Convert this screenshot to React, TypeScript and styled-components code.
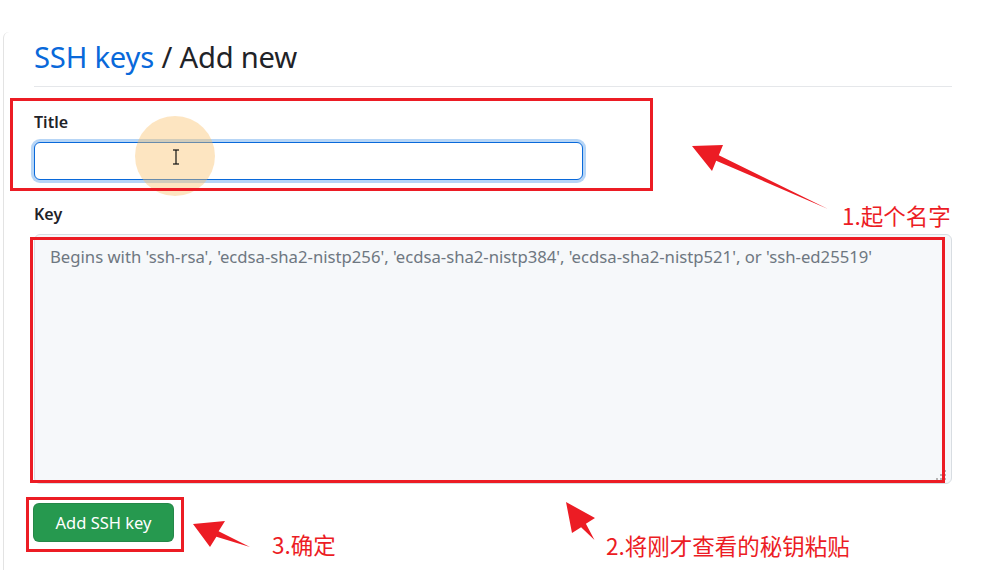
import React from "react";
import styled, { createGlobalStyle } from "styled-components";

const GlobalStyle = createGlobalStyle`
  html, body { margin: 0; padding: 0; background: #ffffff; }
  body { font-family: "Noto Sans", "Liberation Sans", sans-serif; color: #1f2328; }
  * { box-sizing: border-box; }
`;

const Page = styled.div`
  position: relative;
  width: 1000px;
  height: 570px;
  overflow: hidden;
  display: flex;
  background: #fff;
`;

const Rail = styled.div`
  width: 3px;
  flex: none;
`;

const Panel = styled.main`
  flex: 1;
  margin-top: 32px;
  border-left: 1px solid #e3e3e3;
  border-top-left-radius: 6px;
  padding: 5px 0 0 30px;
`;

const Content = styled.div`
  width: 918px;
  display: flex;
  flex-direction: column;
`;

const Heading = styled.h2`
  margin: 0;
  padding-bottom: 9px;
  border-bottom: 1px solid #e5e7ea;
  font-size: 29.2px;
  font-weight: 400;
  line-height: 40px;
  letter-spacing: -0.2px;
`;

const Crumb = styled.span`
  color: #0969da;
`;

const Form = styled.form`
  display: flex;
  flex-direction: column;
  padding-top: 23px;
`;

const Group = styled.div<{ $gap?: number }>`
  display: flex;
  flex-direction: column;
  gap: 8px;
  margin-bottom: ${(p) => p.$gap ?? 0}px;
`;

const Label = styled.label`
  font-size: 16px;
  font-weight: 600;
  line-height: 24px;
  color: #1f2328;
`;

const TextInput = styled.input`
  width: 549px;
  height: 38px;
  border: 1px solid #0969da;
  border-radius: 6px;
  box-shadow: 0 0 0 3px #b6d5f6;
  background: #fff;
  outline: none;
  font: inherit;
  padding: 0 12px;
`;

const KeyArea = styled.textarea`
  width: 918px;
  height: 250px;
  border: 1px solid #d8dde2;
  border-radius: 6px;
  background: #f6f8fa;
  font-family: inherit;
  font-size: 16.7px;
  line-height: 24px;
  padding: 10px 15px;
  color: #1f2328;
  resize: none;
  &::placeholder { color: #6e7781; }
`;

const Submit = styled.button`
  align-self: flex-start;
  margin-top: 19px;
  margin-left: -1px;
  width: 141px;
  height: 39px;
  border: 1px solid rgba(31, 35, 40, 0.15);
  border-radius: 6px;
  background: #26994f;
  color: #fff;
  font-family: inherit;
  font-size: 16.5px;
  font-weight: 400;
  cursor: pointer;
`;

const Overlay = styled.svg`
  position: absolute;
  inset: 0;
  pointer-events: none;
`;

const Spot = styled.div`
  position: absolute;
  left: 135px;
  top: 116px;
  width: 80px;
  height: 80px;
  border-radius: 50%;
  background: rgba(250, 190, 100, 0.4);
  pointer-events: none;
`;

const Note = styled.span<{ $x: number; $y: number }>`
  position: absolute;
  left: ${(p) => p.$x}px;
  top: ${(p) => p.$y}px;
  color: #ec1c24;
  font-family: "Noto Sans CJK SC", "Noto Sans", sans-serif;
  font-size: 22.5px;
  line-height: 28px;
  white-space: nowrap;
`;

const RED = "#ec1c24";

export default function App() {
  return (
    <>
      <GlobalStyle />
      <Page>
        <Rail />
        <Panel>
          <Content>
            <Heading>
              <Crumb>SSH keys</Crumb> / Add new
            </Heading>
            <Form onSubmit={(e) => e.preventDefault()}>
              <Group $gap={22}>
                <Label htmlFor="title">Title</Label>
                <TextInput id="title" type="text" />
              </Group>
              <Group>
                <Label htmlFor="key">Key</Label>
                <KeyArea
                  id="key"
                  placeholder="Begins with 'ssh-rsa', 'ecdsa-sha2-nistp256', 'ecdsa-sha2-nistp384', 'ecdsa-sha2-nistp521', or 'ssh-ed25519'"
                />
              </Group>
              <Submit type="submit">Add SSH key</Submit>
            </Form>
          </Content>
        </Panel>

        <Spot />
        <Overlay width="1000" height="570" viewBox="0 0 1000 570">
          <g stroke="#111" strokeWidth="1.2" fill="none">
            <line x1="176" y1="150" x2="176" y2="164" />
            <line x1="173" y1="150" x2="179" y2="150" />
            <line x1="173" y1="164" x2="179" y2="164" />
          </g>
          <g fill="#b4b4b4">
            <rect x="944" y="470" width="2" height="2" />
            <rect x="944" y="474" width="2" height="2" />
            <rect x="940" y="474" width="2" height="2" />
            <rect x="944" y="478" width="2" height="2" />
            <rect x="940" y="478" width="2" height="2" />
            <rect x="936" y="478" width="2" height="2" />
          </g>
          <g fill="none" stroke={RED} strokeWidth="3">
            <rect x="11.5" y="99.5" width="640" height="90" />
            <rect x="31.5" y="238.5" width="912" height="243" />
            <rect x="27.5" y="498.5" width="155" height="52" />
          </g>
          <g fill={RED}>
            <polygon points="692,146 723,145 718.8,155.3 828,209 716.2,160.7 712,171" />
            <polygon points="566,502 595,518 585.9,523.7 594.5,540 581.1,527.3 572,533" />
            <polygon points="193,524 225,521 218.6,531.2 250,547 216.4,536.8 210,547" />
          </g>
        </Overlay>
        <Note $x={842} $y={201}>1.起个名字</Note>
        <Note $x={606} $y={531}>2.将刚才查看的秘钥粘贴</Note>
        <Note $x={272} $y={530}>3.确定</Note>
      </Page>
    </>
  );
}
